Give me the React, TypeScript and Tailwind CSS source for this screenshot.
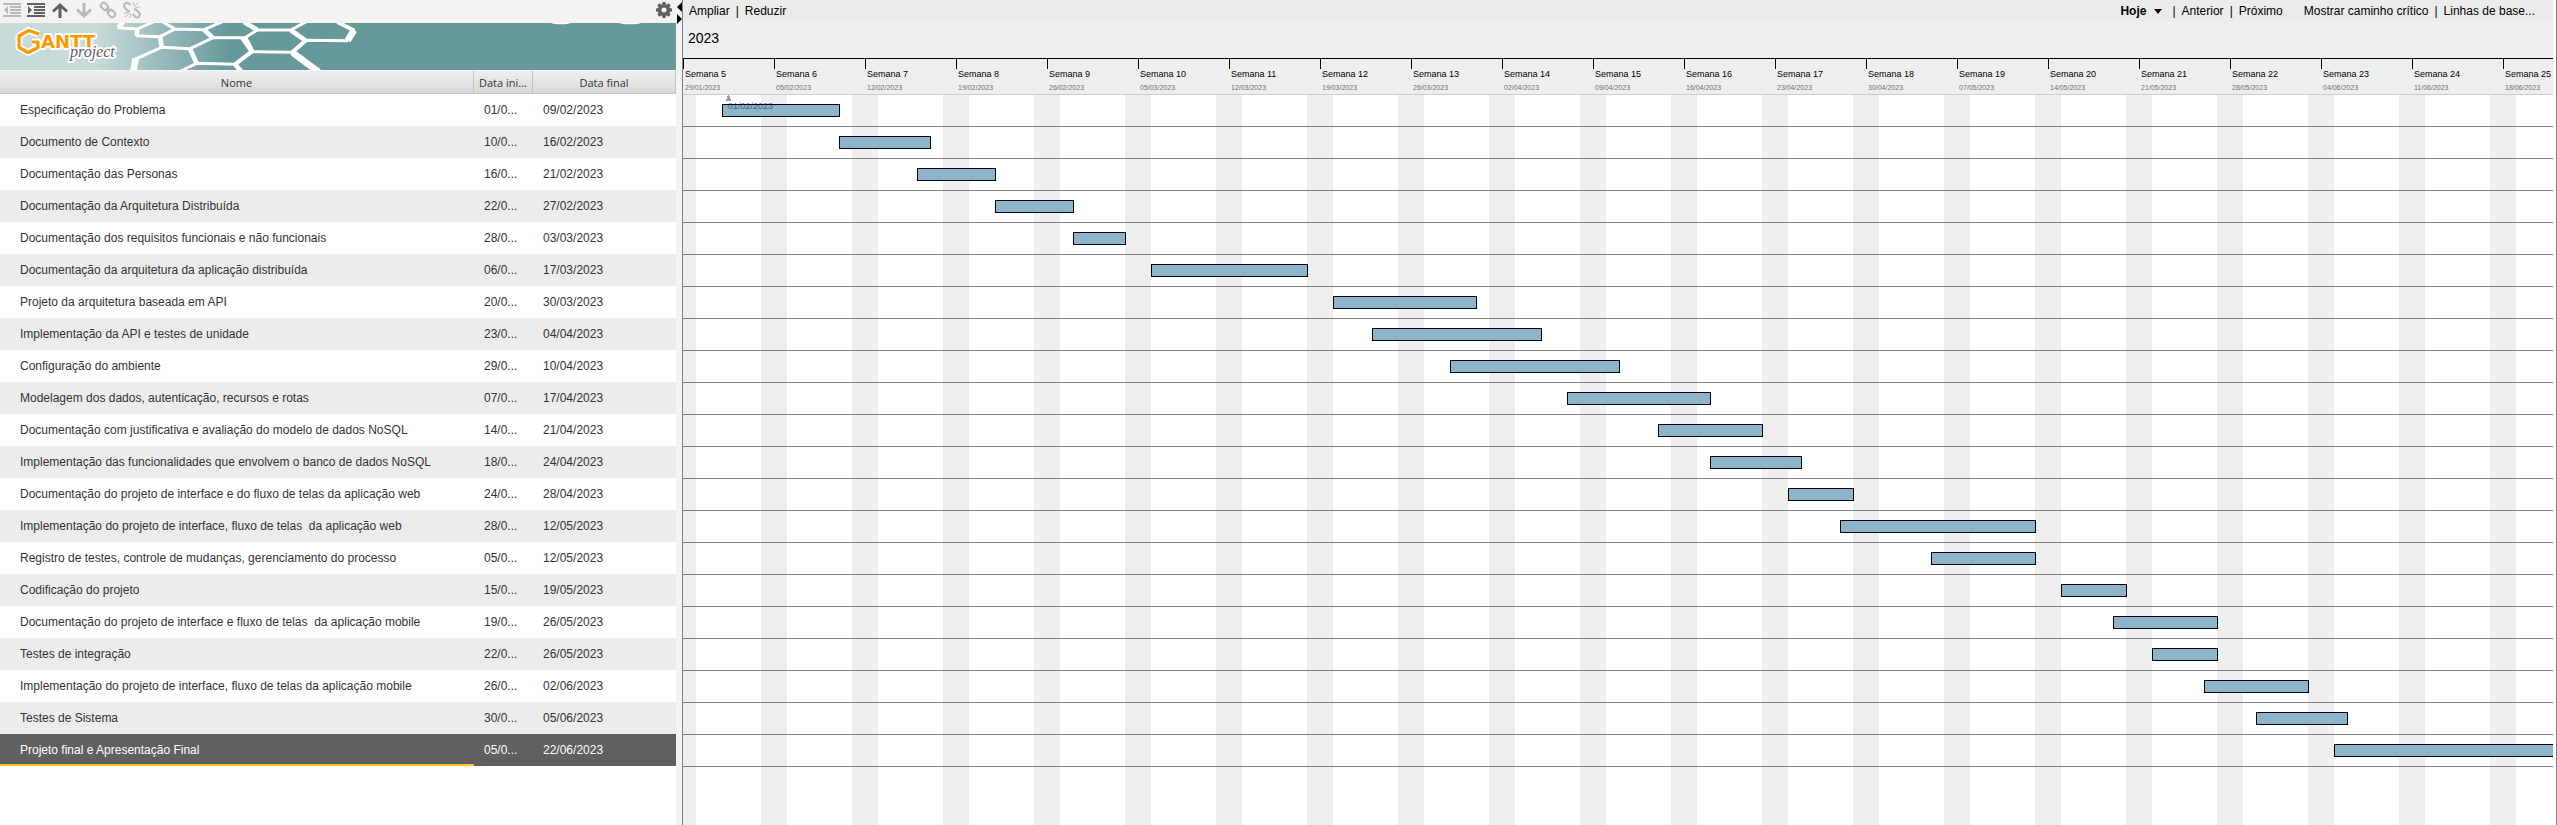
import React from "react";

type Task = { name: string; start: string; end: string };

const tasks: Task[] = [
  { name: "Especificação do Problema", start: "01/02", end: "09/02" },
  { name: "Documento de Contexto", start: "10/02", end: "16/02" },
  { name: "Documentação das Personas", start: "16/02", end: "21/02" },
  { name: "Documentação da Arquitetura Distribuída", start: "22/02", end: "27/02" },
  { name: "Documentação dos requisitos funcionais e não funcionais", start: "28/02", end: "03/03" },
  { name: "Documentação da arquitetura da aplicação distribuída", start: "06/03", end: "17/03" },
  { name: "Projeto da arquitetura baseada em API", start: "20/03", end: "30/03" },
  { name: "Implementação da API e testes de unidade", start: "23/03", end: "04/04" },
  { name: "Configuração do ambiente", start: "29/03", end: "10/04" },
  { name: "Modelagem dos dados, autenticação, recursos e rotas", start: "07/04", end: "17/04" },
  { name: "Documentação com justificativa e avaliação do modelo de dados NoSQL", start: "14/04", end: "21/04" },
  { name: "Implementação das funcionalidades que envolvem o banco de dados NoSQL", start: "18/04", end: "24/04" },
  { name: "Documentação do projeto de interface e do fluxo de telas da aplicação web", start: "24/04", end: "28/04" },
  { name: "Implementação do projeto de interface, fluxo de telas  da aplicação web", start: "28/04", end: "12/05" },
  { name: "Registro de testes, controle de mudanças, gerenciamento do processo", start: "05/05", end: "12/05" },
  { name: "Codificação do projeto", start: "15/05", end: "19/05" },
  { name: "Documentação do projeto de interface e fluxo de telas  da aplicação mobile", start: "19/05", end: "26/05" },
  { name: "Testes de integração", start: "22/05", end: "26/05" },
  { name: "Implementação do projeto de interface, fluxo de telas da aplicação mobile", start: "26/05", end: "02/06" },
  { name: "Testes de Sistema", start: "30/05", end: "05/06" },
  { name: "Projeto final e Apresentação Final", start: "05/06", end: "22/06" },
];

const YEAR = 2023;
const DAY_WIDTH = 13;
const DAY_MS = 86400000;
const ORIGIN = Date.UTC(YEAR, 0, 29);

function dayIndex(date: string) {
  const [d, m] = date.split("/").map(Number);
  return (Date.UTC(YEAR, m - 1, d) - ORIGIN) / DAY_MS;
}

const weeks = Array.from({ length: 21 }, (_, i) => {
  const d = new Date(ORIGIN + i * 7 * DAY_MS);
  const pad = (n: number) => String(n).padStart(2, "0");
  return { label: `Semana ${i + 5}`, date: `${pad(d.getUTCDate())}/${pad(d.getUTCMonth() + 1)}/${YEAR}` };
});

function IconButton({ label, className, children }: { label: string; className: string; children: React.ReactNode }) {
  return (
    <button type="button" aria-label={label} className={`flex h-5 w-6 items-center justify-center ${className}`}>
      <svg width="20" height="20" viewBox="0 0 20 20" fill="currentColor" aria-hidden="true">{children}</svg>
    </button>
  );
}

function Toolbar() {
  return (
    <div className="flex h-[23px] items-start bg-[#f3f3f3]">
      <IconButton label="Recuar" className="text-[#b8b8b8]">
        <path d="M1 3h18v2H1zM8 6h11v2H8zM8 9h11v2H8zM8 12h11v2H8zM1 15h18v2H1zM6 6v8L2 10z" />
      </IconButton>
      <IconButton label="Avançar" className="text-[#606060]">
        <path d="M1 3h18v2H1zM8 6h11v2H8zM8 9h11v2H8zM8 12h11v2H8zM1 15h18v2H1zM2 6v8l4-4z" />
      </IconButton>
      <IconButton label="Mover para cima" className="text-[#606060]">
        <path d="M10 3l8 7.500-2 2-4.500-4.200V18h-3V8.300L4 12.500l-2-2z" />
      </IconButton>
      <IconButton label="Mover para baixo" className="text-[#b8b8b8]">
        <path d="M10 18l8-7.500-2-2-4.500 4.200V3h-3v9.700L4 8.500l-2 2z" />
      </IconButton>
      <IconButton label="Ligar tarefas" className="text-[#b8b8b8]">
        <g fill="none" stroke="currentColor" strokeWidth="2">
          <rect x="-4" y="-2.800" width="8" height="5.600" rx="2.800" transform="translate(6.500 6.500) rotate(45)" />
          <rect x="-4" y="-2.800" width="8" height="5.600" rx="2.800" transform="translate(13.500 13.500) rotate(45)" />
          <path d="M8 8l4 4" />
        </g>
      </IconButton>
      <IconButton label="Desligar tarefas" className="text-[#b8b8b8]">
        <g fill="none" stroke="currentColor" strokeWidth="2">
          <path d="M8.500 5L7 3.800A2.800 2.800 0 0 0 3 8l2.500 2.500q1 1 2.500.5M12 9.500q1.500-.5 2.500.5L17 12.500a2.800 2.800 0 0 1-4 4L10.500 14" />
          <path d="M12 6.500l4.500-4M13 8l5-1.500M11 5.500L12 2M7.500 13l-4.500 4M6.500 12L2 13.500M9 14l-1.500 4" strokeWidth="1" />
        </g>
      </IconButton>
      <button type="button" aria-label="Configurações" className="ml-auto flex h-5 w-6 items-center justify-center text-[#606060]">
        <svg width="16" height="16" viewBox="-8 -8 16 16" aria-hidden="true">
          <circle r="4.300" fill="none" stroke="currentColor" strokeWidth="3.400" />
          {[0, 45, 90, 135].map((a) => (
            <path key={a} d="M-1.500-8h3l.5 3h-4zM-2 5h4l-.5 3h-3z" fill="currentColor" transform={`rotate(${a})`} />
          ))}
        </svg>
      </button>
    </div>
  );
}

function Banner() {
  return (
    <div className="h-[47px] overflow-hidden bg-[#669999]">
      <svg width="676" height="47" viewBox="0 23 676 47" role="img" aria-label="GanttProject">
        <defs>
          <linearGradient id="fade" x1="0" x2="1">
            <stop offset="0.42" stopColor="#c8dada" />
            <stop offset="1" stopColor="#669999" />
          </linearGradient>
        </defs>
        <rect x="0" y="23" width="230" height="47" fill="url(#fade)" />
        <g transform="translate(100 20) scale(0.3333)" fill="none" stroke="#ffffff" strokeLinejoin="round">
          <path
            strokeWidth="9"
            d="M52 23L112 27L160 6M108 47L180 50L225 27L312 29L365 6M225 27L188 6M340 53L435 53L472 30L572 30L618 6M185 82L270 86L340 53M185 82L104 118M290 130L405 133L455 95L577 97L618 61L745 62M290 130L240 154"
          />
          <path
            strokeWidth="14"
            d="M70 6L54 23M112 27L110 47M180 50L185 82M312 29L338 53M472 30L432 6M572 30L616 61M270 86L290 130M435 53L457 95M405 133L424 154"
          />
          <path strokeWidth="20" d="M107 116L100 154M577 97L656 156M743 62L762 30" />
          <path strokeWidth="12" d="M764 32L712 6M405 133L455 95L425 52M577 97L618 61" />
        </g>
        <ellipse cx="561" cy="22.500" rx="10" ry="1.800" fill="#ffffff" />
        <ellipse cx="630" cy="22.500" rx="11" ry="1.800" fill="#ffffff" />
        <g strokeLinejoin="round" fill="none">
          <path d="M39 34L28.500 30.500L19 36V47.500L28 52.500L38 47.500V42H32" stroke="#ffffff" strokeWidth="7" />
          <g style={{ paintOrder: "stroke" }} stroke="#ffffff" strokeWidth="4">
            <text x="41" y="48" fontFamily="DejaVu Sans" fontWeight="700" fontSize="18" fill="#ff9900">ANTT</text>
            <text x="70" y="57" fontFamily="Liberation Serif" fontStyle="italic" fontSize="16" fill="#606060">project</text>
          </g>
          <path d="M39 34L28.500 30.500L19 36V47.500L28 52.500L38 47.500V42H32" stroke="#ff9900" strokeWidth="3.200" />
        </g>
      </svg>
    </div>
  );
}

function TaskTable() {
  return (
    <table className="w-full table-fixed border-separate border-spacing-0 text-left text-[12px] text-[#333333]">
      <colgroup>
        <col />
        <col className="w-[59px]" />
        <col className="w-[143px]" />
      </colgroup>
      <thead>
        <tr className="h-6 font-['Open_Sans',sans-serif] text-[11px]">
          {["Nome", "Data ini...", "Data final"].map((h) => (
            <th
              key={h}
              className="border-t border-r border-b border-t-[#f6f6f6] border-r-[#c4c4c4] border-b-[#c4c4c4] bg-linear-to-b from-[#efefef] to-[#d9d9d9] px-0 pt-[2px] pb-0 text-center font-normal whitespace-nowrap"
            >
              {h}
            </th>
          ))}
        </tr>
      </thead>
      <tbody>
        {tasks.map((t, i) => {
          const selected = i === tasks.length - 1;
          return (
            <tr key={t.name} className={`h-8 whitespace-pre ${selected ? "bg-[#606060] text-white" : "odd:bg-white even:bg-[#ececec]"}`}>
              <td className={`py-0 pr-0 pl-5 ${selected ? "shadow-[inset_0_-2px_0_#ffc423]" : ""}`}>{t.name}</td>
              <td className="py-0 pr-0 pl-[10px]">{t.start.slice(0, 4)}...</td>
              <td className="py-0 pr-0 pl-[10px]">{t.end}/{YEAR}</td>
            </tr>
          );
        })}
      </tbody>
    </table>
  );
}

function Splitter() {
  return (
    <div className="w-[6px] shrink-0 bg-[#f3f3f3]">
      <svg width="6" height="24" viewBox="0 0 6 24" aria-hidden="true">
        <path d="M6 2v10L1 7zM1 14v10l5-5z" />
      </svg>
    </div>
  );
}

function ChartToolbar() {
  return (
    <div className="flex h-[22px] items-center bg-[#ebebeb] px-[6px] text-[12px] text-black">
      <button type="button">Ampliar</button>
      <span className="px-[6px]">|</span>
      <button type="button">Reduzir</button>
      <button type="button" className="ml-auto flex items-center gap-2 font-bold">
        Hoje
        <svg width="8" height="5" viewBox="0 0 8 5" aria-hidden="true"><path d="M0 0h8L4 5z" /></svg>
      </button>
      <span className="pr-[6px] pl-[10px]">|</span>
      <button type="button">Anterior</button>
      <span className="px-[6px]">|</span>
      <button type="button">Próximo</button>
      <button type="button" className="ml-[21px]">Mostrar caminho crítico</button>
      <span className="px-[6px]">|</span>
      <button type="button" className="mr-3">Linhas de base...</button>
    </div>
  );
}

function Timeline() {
  return (
    <div className="border-b border-[#cccccc] bg-[#eeeeee] text-black">
      <div className="flex h-9 items-start pt-[6px] pl-[5px] text-[14px] leading-5">{YEAR}</div>
      <div className="flex h-9 overflow-hidden border-t border-black">
        {weeks.map((w) => (
          <div key={w.label} className="w-[91px] shrink-0">
            <div className="h-[10px] border-l border-black" />
            <div className="pl-[2px] text-[9px] leading-[11px] whitespace-nowrap">{w.label}</div>
            <div className="pt-[2px] pl-[2px] text-[7px] leading-[11px] text-[#707070]">{w.date}</div>
          </div>
        ))}
      </div>
    </div>
  );
}

function Chart() {
  return (
    <div className="grow overflow-hidden bg-[repeating-linear-gradient(to_right,#eeeeee_0px,#eeeeee_13px,#ffffff_13px,#ffffff_78px,#eeeeee_78px,#eeeeee_91px)]">
      {tasks.map((t, i) => {
        const from = dayIndex(t.start);
        const to = dayIndex(t.end) + 1;
        return (
          <div key={t.name} className="relative h-8 border-b border-[#808080] pt-[9px]">
            <div
              className="h-[13px] border border-black bg-[#8cb4cd]"
              style={{ marginLeft: from * DAY_WIDTH, width: (to - from) * DAY_WIDTH + 1 }}
            />
            {i === 0 && (
              <div className="absolute top-0 left-[43px] text-[9px] text-black/50">
                <svg width="5" height="6" viewBox="0 0 5 6" className="fill-[#999999]" aria-hidden="true"><path d="M2 0h1v1h1v3h1v2H0V4h1V1h1z" /></svg>
                <div className="pl-[2px] leading-[11px]">{t.start}/{YEAR}</div>
              </div>
            )}
          </div>
        );
      })}
    </div>
  );
}

export default function App() {
  return (
    <main className="flex min-h-screen bg-white font-['Liberation_Sans',Arial,sans-serif]">
      <section className="w-[676px] shrink-0">
        <Toolbar />
        <Banner />
        <TaskTable />
      </section>
      <Splitter />
      <section className="flex min-w-0 grow flex-col border-l border-[#808080]">
        <ChartToolbar />
        <Timeline />
        <Chart />
      </section>
      <div className="w-1 shrink-0 border-r border-[#808080]" />
    </main>
  );
}
